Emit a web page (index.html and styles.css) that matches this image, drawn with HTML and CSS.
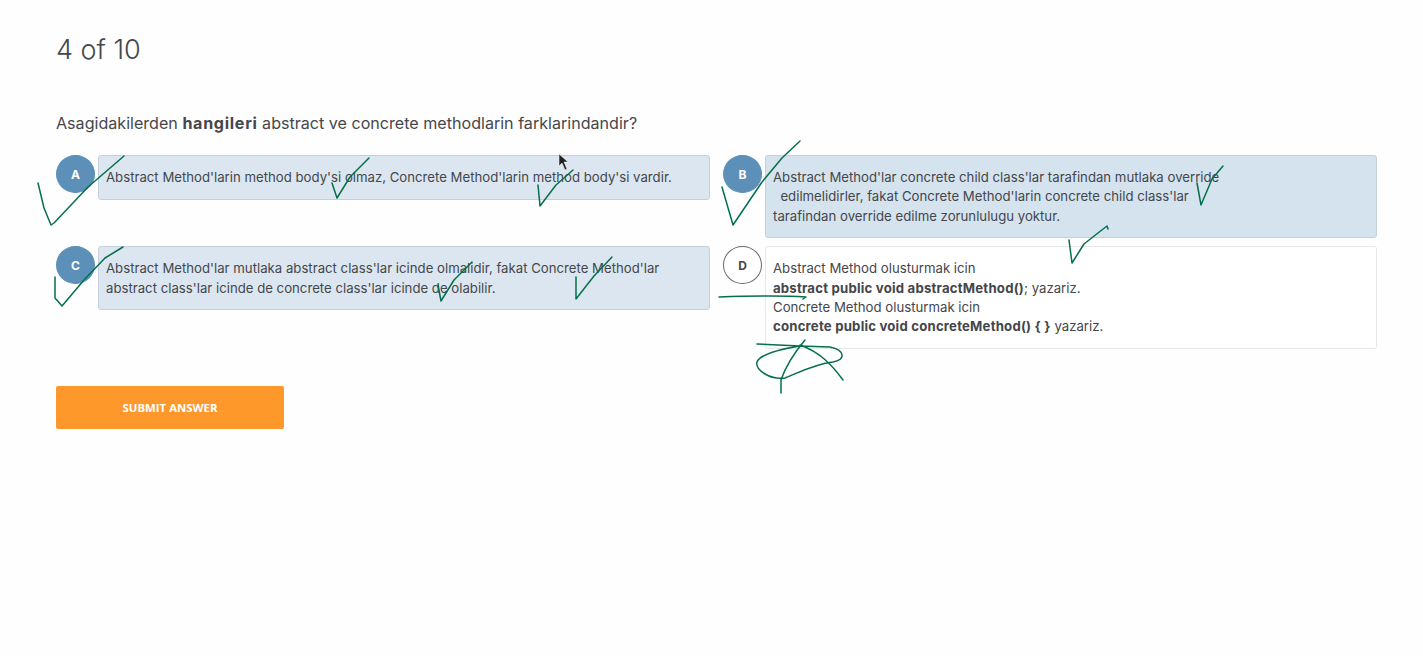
FILE: index.html
```html
<!DOCTYPE html>
<html lang="tr">
<head>
<meta charset="utf-8">
<title>Quiz</title>
<link rel="stylesheet" href="styles.css">
</head>
<body>
<main class="quiz">
  <h1 class="progress">4 of 10</h1>
  <p class="question">Asagidakilerden <strong>hangileri</strong> abstract ve concrete methodlarin farklarindandir?</p>
  <div class="options">
    <div class="option selected">
      <span class="letter">A</span>
      <div class="answer">Abstract Method'larin method body'si olmaz, Concrete Method'larin method body'si vardir.</div>
    </div>
    <div class="option selected strong">
      <span class="letter">B</span>
      <div class="answer">Abstract Method'lar concrete child class'lar tarafindan mutlaka override<br>&nbsp;&nbsp;edilmelidirler, fakat Concrete Method'larin concrete child class'lar<br>tarafindan override edilme zorunlulugu yoktur.</div>
    </div>
    <div class="option selected">
      <span class="letter">C</span>
      <div class="answer">Abstract Method'lar mutlaka abstract class'lar icinde olmalidir, fakat Concrete Method'lar<br>abstract class'lar icinde de concrete class'lar icinde de olabilir.</div>
    </div>
    <div class="option">
      <span class="letter">D</span>
      <div class="answer">Abstract Method olusturmak icin<br><b>abstract public void abstractMethod()</b>; yazariz.<br>Concrete Method olusturmak icin<br><b>concrete public void concreteMethod() { }</b> yazariz.</div>
    </div>
  </div>
  <button class="submit" type="button">SUBMIT ANSWER</button>
</main>
<svg class="ink" width="1423" height="656" viewBox="0 0 1423 656" aria-hidden="true">
  <g class="pen">
    <path d="M38 183 L44 208 L51 225 L54 223 L88 187 L124 156"/>
    <path d="M332 183 L337 198 L350 177 L369 158"/>
    <path d="M538 185 L540 206 L556 185 L573 170"/>
    <path d="M722 187 L733 225 L762 182 L782 158 L800 141"/>
    <path d="M1197 183 L1201 205 L1212 179 L1223 166"/>
    <path d="M1069 240 L1072 263 L1084 244 L1098 233 L1107 226 L1108 229"/>
    <path d="M55 277 L55 298 L62 306 L84 280 L105 258 L123 247"/>
    <path d="M438 285 L441 301 L454 280 L472 262"/>
    <path d="M576 277 L576 299 L594 276 L612 257"/>
    <path d="M719 297 C750 296 790 296 806 297 L803 299"/>
    <path d="M757 344 L800 346 L830 347 C845 350 846 360 833 362 C815 364 800 372 785 378 C770 380 755 370 757 362 C760 355 775 350 800 346"/>
    <path d="M805 340 C795 352 785 368 781 380 L781 393"/>
    <path d="M800 345 C820 352 832 365 843 380"/>
  </g>
  <path class="cursor" d="M559 154 L559 166 L562 163 L565 170 L567 169 L564 162 L568 162 Z"/>
</svg>
</body>
</html>
```
FILE: styles.css
```css
* { box-sizing: border-box; }
html, body { margin: 0; height: 100%; }
body {
  background: #fefefe;
  color: #3f4147;
  font-family: Inter, Roboto, "Liberation Sans", sans-serif;
  overflow: hidden;
}
.quiz { padding: 34px 46px 0 56px; }
.progress {
  margin: 0;
  font-size: 27px;
  font-weight: 300;
  line-height: 32px;
  color: #45474c;
}
.question {
  margin: 47px 0 0;
  font-size: 16.1px;
  line-height: 20px;
  color: #45474c;
}
.question strong { font-weight: 700; letter-spacing: 0.7px; }
.options {
  margin-top: 22px;
  display: grid;
  grid-template-columns: 654px 654px;
  column-gap: 13px;
  row-gap: 8px;
  align-items: start;
}
.option { display: flex; gap: 3px; align-items: flex-start; }
.letter {
  flex: none;
  width: 39px;
  height: 38px;
  border-radius: 50%;
  border: 1px solid #666a6e;
  background: #fff;
  display: flex;
  align-items: center;
  justify-content: center;
  font-size: 12px;
  font-weight: 700;
  color: #45474c;
}
.answer {
  flex: 1;
  min-height: 45px;
  border: 1px solid #e6e7e9;
  border-radius: 3px;
  background: #fff;
  padding: 12px 7px 11px;
  font-size: 13.2px;
  line-height: 19.4px;
  color: #44464c;
}
.answer b { font-weight: 700; letter-spacing: 0.2px; }
.selected .letter { background: #5c90b8; border-color: #5c90b8; color: #fff; }
.selected .answer { background: #dce6f0; border-color: #c6d0dc; }
.strong .answer { background: #d5e3ee; }
.submit {
  display: block;
  margin-top: 37px;
  width: 228px;
  height: 43px;
  border: 0;
  border-radius: 2px;
  background: #ff982b;
  color: #fff;
  font-family: "Open Sans", sans-serif;
  font-size: 11.4px;
  font-weight: 700;
  cursor: pointer;
}
.ink { position: absolute; left: 0; top: 0; pointer-events: none; }
.pen path { fill: none; stroke: #04704a; stroke-width: 1.5; stroke-linejoin: round; stroke-linecap: round; }
.cursor { fill: #222; stroke: #fff; stroke-width: 0.5; }
```
